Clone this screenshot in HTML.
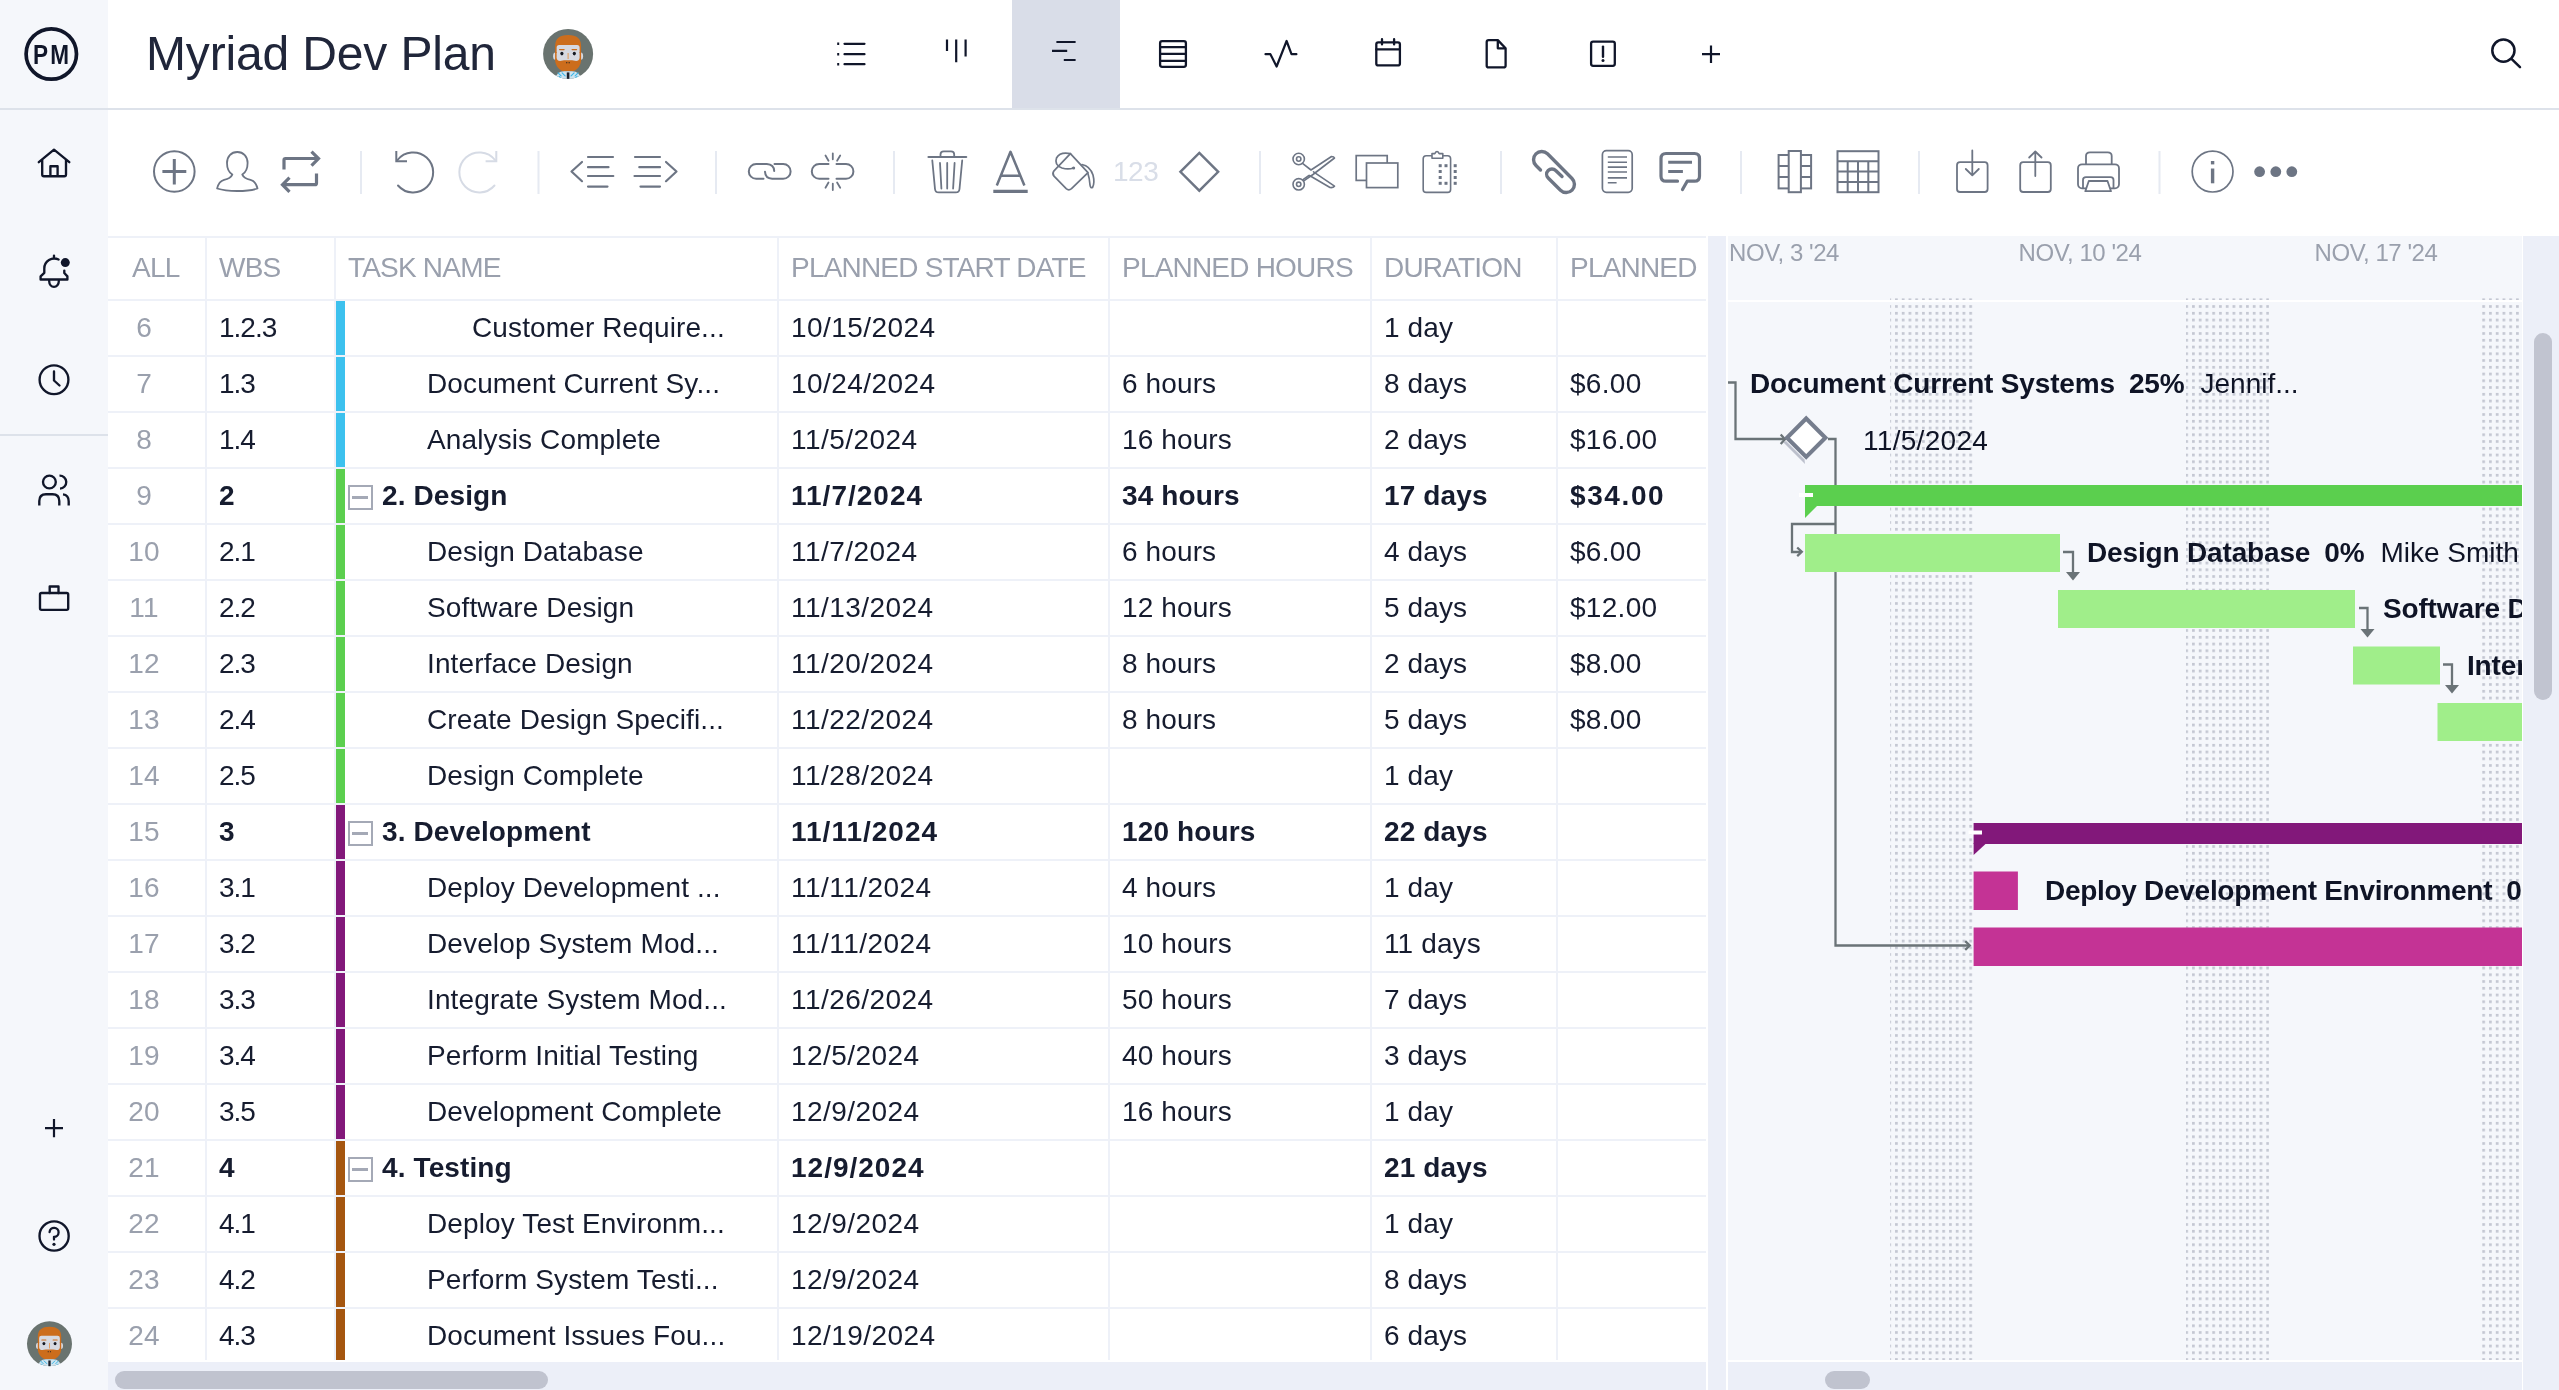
<!DOCTYPE html><html><head><meta charset="utf-8"><title>Myriad Dev Plan</title><style>html,body{margin:0;padding:0;background:#fff;}
body{width:2559px;height:1390px;overflow:hidden;font-family:"Liberation Sans",sans-serif;color:#0f1426;}
#app{will-change:transform;position:relative;width:2559px;height:1390px;overflow:hidden;background:#fff;}
.sidebar{position:absolute;left:0;top:0;width:108px;height:1390px;background:#f5f7fb;}
.tabact{position:absolute;left:1012px;top:0;width:108px;height:108px;background:#d9dde8;}
.hline{position:absolute;left:0;top:108px;width:2559px;height:2px;background:#dde2ea;}
.sline{position:absolute;left:0;top:434px;width:108px;height:2px;background:#dde2ea;}
.title{position:absolute;left:146px;top:24px;font-size:48px;line-height:60px;color:#20263a;letter-spacing:-0.15px;white-space:nowrap;}
.pm{position:absolute;left:21px;top:40px;width:60px;text-align:center;font-weight:bold;font-size:27.5px;line-height:30px;color:#10162a;transform:scaleX(0.82);transform-origin:50% 50%;letter-spacing:2.5px;text-indent:2.5px;}
.t123{position:absolute;left:1113px;top:156px;font-size:28px;line-height:32px;color:#d9dee8;letter-spacing:-0.5px;}
.tbl{position:absolute;left:0;top:0;width:1706px;height:1360px;overflow:hidden;}
.topline{position:absolute;left:108px;top:236px;width:1598px;height:2px;background:#eef1f8;}
.th{position:absolute;top:250.5px;font-size:28px;line-height:34px;color:#9aa0ad;letter-spacing:-0.8px;white-space:nowrap;}
.hl{position:absolute;left:108px;width:1598px;height:2px;background:#eef1f8;}
.vl{position:absolute;top:238px;width:2px;height:1124px;background:#eef1f8;}
.r{position:absolute;left:0;width:1706px;height:54px;font-size:28px;line-height:54px;white-space:nowrap;letter-spacing:0.12px;color:#161c2f;}
.r.b{font-weight:bold;}
.r .cb{position:absolute;left:336px;top:0;width:9px;height:54px;}
.r .n{position:absolute;left:108px;width:72px;text-align:center;color:#9aa0ad;font-weight:normal;}
.r .c{position:absolute;top:0;}
.r .cw{letter-spacing:-1px;}
.r .cd{letter-spacing:0.45px;}
.r.b .cd{letter-spacing:1px;}
.r .cc{letter-spacing:0.3px;}
.r.b .cc{letter-spacing:1.6px;}
.r .tg{position:absolute;left:347.5px;top:15.5px;width:25px;height:25px;border:2px solid #a4a9b6;box-sizing:border-box;}
.r .tg:after{content:"";position:absolute;left:2.5px;top:9px;width:16px;height:3px;background:#a4a9b6;}
.divider{position:absolute;left:1708px;top:236px;width:18px;height:1154px;background:#eceff8;}
.gantt{position:absolute;left:1728px;top:236px;width:794px;height:1126px;background:#f5f7fb;overflow:hidden;}
.gantt svg{position:absolute;left:0;top:0;}
.gh{position:absolute;top:0px;width:296px;text-align:center;font-size:24px;line-height:34px;color:#9aa0ad;white-space:nowrap;letter-spacing:-0.45px;}
.gl{position:absolute;height:40px;margin-top:-19px;line-height:40px;font-size:28px;white-space:nowrap;}
.gl .gb{font-weight:bold;letter-spacing:-0.16px;}
.gl .gx{letter-spacing:-0.29px;}
.gl .gd{letter-spacing:0.3px;}
.gl .gp{margin-left:14px;}
.gl .gr{margin-left:16px;}
.gl .gr:first-child{margin-left:0;}
.vsb{position:absolute;left:2523px;top:236px;width:36px;height:1154px;background:#eceff8;}
.vth{position:absolute;left:11px;top:97px;width:18px;height:367px;border-radius:9px;background:#c1c4d0;}
.hsb1{position:absolute;left:108px;top:1362px;width:1598px;height:28px;background:#eceff8;}
.hth1{position:absolute;left:7px;top:9px;width:433px;height:18px;border-radius:9px;background:#c0c3cf;}
.hsb2{position:absolute;left:1728px;top:1362px;width:794px;height:28px;background:#eceff8;}
.hth2{position:absolute;left:97px;top:9px;width:45px;height:18px;border-radius:9px;background:#c0c3cf;}
svg.ic{position:absolute;left:0;top:0;width:2559px;height:240px;}
svg.sb{position:absolute;left:0;top:0;width:108px;height:1390px;}
</style></head><body>
<div id="app">
<div class="sidebar"></div>
<div class="tabact"></div>
<div class="hline"></div><div class="sline"></div>
<div class="title">Myriad Dev Plan</div>
<div class="pm">PM</div>
<div class="t123">123</div>
<div class="tbl">
<div class="topline"></div>
<div class="th" style="left:132px">ALL</div>
<div class="th" style="left:219px">WBS</div>
<div class="th" style="left:348px">TASK NAME</div>
<div class="th" style="left:791px">PLANNED START DATE</div>
<div class="th" style="left:1122px">PLANNED HOURS</div>
<div class="th" style="left:1384px">DURATION</div>
<div class="th" style="left:1570px">PLANNED</div>
<div class="hl" style="top:299px"></div>
<div class="hl" style="top:355px"></div>
<div class="hl" style="top:411px"></div>
<div class="hl" style="top:467px"></div>
<div class="hl" style="top:523px"></div>
<div class="hl" style="top:579px"></div>
<div class="hl" style="top:635px"></div>
<div class="hl" style="top:691px"></div>
<div class="hl" style="top:747px"></div>
<div class="hl" style="top:803px"></div>
<div class="hl" style="top:859px"></div>
<div class="hl" style="top:915px"></div>
<div class="hl" style="top:971px"></div>
<div class="hl" style="top:1027px"></div>
<div class="hl" style="top:1083px"></div>
<div class="hl" style="top:1139px"></div>
<div class="hl" style="top:1195px"></div>
<div class="hl" style="top:1251px"></div>
<div class="hl" style="top:1307px"></div>
<div class="hl" style="top:1363px"></div>
<div class="vl" style="left:205px"></div>
<div class="vl" style="left:334px"></div>
<div class="vl" style="left:777px"></div>
<div class="vl" style="left:1108px"></div>
<div class="vl" style="left:1370px"></div>
<div class="vl" style="left:1556px"></div>
<div class="r" style="top:301px">
<span class="cb" style="background:#3cc1ee"></span>
<span class="n">6</span><span class="c cw" style="left:219px">1.2.3</span>
<span class="c" style="left:472px">Customer Require...</span>
<span class="c cd" style="left:791px">10/15/2024</span>
<span class="c" style="left:1384px">1 day</span>
</div>
<div class="r" style="top:357px">
<span class="cb" style="background:#3cc1ee"></span>
<span class="n">7</span><span class="c cw" style="left:219px">1.3</span>
<span class="c" style="left:427px">Document Current Sy...</span>
<span class="c cd" style="left:791px">10/24/2024</span>
<span class="c" style="left:1122px">6 hours</span>
<span class="c" style="left:1384px">8 days</span>
<span class="c cc" style="left:1570px">$6.00</span>
</div>
<div class="r" style="top:413px">
<span class="cb" style="background:#3cc1ee"></span>
<span class="n">8</span><span class="c cw" style="left:219px">1.4</span>
<span class="c" style="left:427px">Analysis Complete</span>
<span class="c cd" style="left:791px">11/5/2024</span>
<span class="c" style="left:1122px">16 hours</span>
<span class="c" style="left:1384px">2 days</span>
<span class="c cc" style="left:1570px">$16.00</span>
</div>
<div class="r b" style="top:469px">
<span class="cb" style="background:#5bcf4e"></span>
<span class="n">9</span><span class="c cw" style="left:219px">2</span>
<span class="tg"></span>
<span class="c" style="left:382px">2. Design</span>
<span class="c cd" style="left:791px">11/7/2024</span>
<span class="c" style="left:1122px">34 hours</span>
<span class="c" style="left:1384px">17 days</span>
<span class="c cc" style="left:1570px">$34.00</span>
</div>
<div class="r" style="top:525px">
<span class="cb" style="background:#5bcf4e"></span>
<span class="n">10</span><span class="c cw" style="left:219px">2.1</span>
<span class="c" style="left:427px">Design Database</span>
<span class="c cd" style="left:791px">11/7/2024</span>
<span class="c" style="left:1122px">6 hours</span>
<span class="c" style="left:1384px">4 days</span>
<span class="c cc" style="left:1570px">$6.00</span>
</div>
<div class="r" style="top:581px">
<span class="cb" style="background:#5bcf4e"></span>
<span class="n">11</span><span class="c cw" style="left:219px">2.2</span>
<span class="c" style="left:427px">Software Design</span>
<span class="c cd" style="left:791px">11/13/2024</span>
<span class="c" style="left:1122px">12 hours</span>
<span class="c" style="left:1384px">5 days</span>
<span class="c cc" style="left:1570px">$12.00</span>
</div>
<div class="r" style="top:637px">
<span class="cb" style="background:#5bcf4e"></span>
<span class="n">12</span><span class="c cw" style="left:219px">2.3</span>
<span class="c" style="left:427px">Interface Design</span>
<span class="c cd" style="left:791px">11/20/2024</span>
<span class="c" style="left:1122px">8 hours</span>
<span class="c" style="left:1384px">2 days</span>
<span class="c cc" style="left:1570px">$8.00</span>
</div>
<div class="r" style="top:693px">
<span class="cb" style="background:#5bcf4e"></span>
<span class="n">13</span><span class="c cw" style="left:219px">2.4</span>
<span class="c" style="left:427px">Create Design Specifi...</span>
<span class="c cd" style="left:791px">11/22/2024</span>
<span class="c" style="left:1122px">8 hours</span>
<span class="c" style="left:1384px">5 days</span>
<span class="c cc" style="left:1570px">$8.00</span>
</div>
<div class="r" style="top:749px">
<span class="cb" style="background:#5bcf4e"></span>
<span class="n">14</span><span class="c cw" style="left:219px">2.5</span>
<span class="c" style="left:427px">Design Complete</span>
<span class="c cd" style="left:791px">11/28/2024</span>
<span class="c" style="left:1384px">1 day</span>
</div>
<div class="r b" style="top:805px">
<span class="cb" style="background:#82187a"></span>
<span class="n">15</span><span class="c cw" style="left:219px">3</span>
<span class="tg"></span>
<span class="c" style="left:382px">3. Development</span>
<span class="c cd" style="left:791px">11/11/2024</span>
<span class="c" style="left:1122px">120 hours</span>
<span class="c" style="left:1384px">22 days</span>
</div>
<div class="r" style="top:861px">
<span class="cb" style="background:#82187a"></span>
<span class="n">16</span><span class="c cw" style="left:219px">3.1</span>
<span class="c" style="left:427px">Deploy Development ...</span>
<span class="c cd" style="left:791px">11/11/2024</span>
<span class="c" style="left:1122px">4 hours</span>
<span class="c" style="left:1384px">1 day</span>
</div>
<div class="r" style="top:917px">
<span class="cb" style="background:#82187a"></span>
<span class="n">17</span><span class="c cw" style="left:219px">3.2</span>
<span class="c" style="left:427px">Develop System Mod...</span>
<span class="c cd" style="left:791px">11/11/2024</span>
<span class="c" style="left:1122px">10 hours</span>
<span class="c" style="left:1384px">11 days</span>
</div>
<div class="r" style="top:973px">
<span class="cb" style="background:#82187a"></span>
<span class="n">18</span><span class="c cw" style="left:219px">3.3</span>
<span class="c" style="left:427px">Integrate System Mod...</span>
<span class="c cd" style="left:791px">11/26/2024</span>
<span class="c" style="left:1122px">50 hours</span>
<span class="c" style="left:1384px">7 days</span>
</div>
<div class="r" style="top:1029px">
<span class="cb" style="background:#82187a"></span>
<span class="n">19</span><span class="c cw" style="left:219px">3.4</span>
<span class="c" style="left:427px">Perform Initial Testing</span>
<span class="c cd" style="left:791px">12/5/2024</span>
<span class="c" style="left:1122px">40 hours</span>
<span class="c" style="left:1384px">3 days</span>
</div>
<div class="r" style="top:1085px">
<span class="cb" style="background:#82187a"></span>
<span class="n">20</span><span class="c cw" style="left:219px">3.5</span>
<span class="c" style="left:427px">Development Complete</span>
<span class="c cd" style="left:791px">12/9/2024</span>
<span class="c" style="left:1122px">16 hours</span>
<span class="c" style="left:1384px">1 day</span>
</div>
<div class="r b" style="top:1141px">
<span class="cb" style="background:#a5560f"></span>
<span class="n">21</span><span class="c cw" style="left:219px">4</span>
<span class="tg"></span>
<span class="c" style="left:382px">4. Testing</span>
<span class="c cd" style="left:791px">12/9/2024</span>
<span class="c" style="left:1384px">21 days</span>
</div>
<div class="r" style="top:1197px">
<span class="cb" style="background:#a5560f"></span>
<span class="n">22</span><span class="c cw" style="left:219px">4.1</span>
<span class="c" style="left:427px">Deploy Test Environm...</span>
<span class="c cd" style="left:791px">12/9/2024</span>
<span class="c" style="left:1384px">1 day</span>
</div>
<div class="r" style="top:1253px">
<span class="cb" style="background:#a5560f"></span>
<span class="n">23</span><span class="c cw" style="left:219px">4.2</span>
<span class="c" style="left:427px">Perform System Testi...</span>
<span class="c cd" style="left:791px">12/9/2024</span>
<span class="c" style="left:1384px">8 days</span>
</div>
<div class="r" style="top:1309px">
<span class="cb" style="background:#a5560f"></span>
<span class="n">24</span><span class="c cw" style="left:219px">4.3</span>
<span class="c" style="left:427px">Document Issues Fou...</span>
<span class="c cd" style="left:791px">12/19/2024</span>
<span class="c" style="left:1384px">6 days</span>
</div>
</div>
<div class="divider"></div>
<div class="gantt">
<svg width="794" height="1126" viewBox="1728 236 794 1126">
<defs><pattern id="dots" x="1888.300" y="298.400" width="6.750" height="6.750" patternUnits="userSpaceOnUse"><rect x="0" y="0" width="2.700" height="2.700" fill="#c4c7d2"/></pattern></defs>

<rect x="1728" y="1360" width="794" height="2" fill="#fff"/>
<rect x="1890" y="297" width="83" height="1063" fill="url(#dots)"/>
<rect x="2186" y="297" width="83" height="1063" fill="url(#dots)"/>
<rect x="2482" y="297" width="40" height="1063" fill="url(#dots)"/>
<rect x="1728" y="300" width="794" height="2" fill="#fff"/>
<g fill="none" stroke="#6a7377" stroke-width="2.300">
<path d="M1728,382.500H1735.500V439H1784"/><path d="M1780.700,434.400L1785,439.200L1780.700,444"/>
<path d="M1828,439H1835.500V945.500H1969"/><path d="M1965.200,941.200L1969.800,945.500L1965.200,949.800"/>
<path d="M1835.500,524H1792V552H1801"/><path d="M1797.200,547.500L1801.800,551.800L1797.200,556.100"/>
<path d="M2063,552H2073V574"/><path d="M2359,608H2367.500V630"/><path d="M2443,664.500H2452V686"/>
</g>
<g fill="#6a7377"><path d="M2066,572H2080L2073,580.500Z"/><path d="M2360.500,629H2374.500L2367.500,637.500Z"/><path d="M2445,685H2459L2452,693.500Z"/></g>
<path d="M1786,441L1804.500,459.500L1805,464L1783.500,442.500Z" fill="#bcc0cc"/>
<path d="M1806.200,418.500L1825.400,437.700L1806.200,456.900L1787,437.700Z" fill="#fff" stroke="#757d8d" stroke-width="4.100"/>
<rect x="1805" y="485" width="717" height="21" fill="#5bcf4e"/><path d="M1805,505H1818L1805,518Z" fill="#5bcf4e"/><rect x="1799" y="493" width="14" height="4" fill="#fff"/>
<rect x="1805" y="534" width="255" height="38" fill="#a0ee8a"/>
<rect x="2058" y="590" width="297" height="38" fill="#a0ee8a"/>
<rect x="2353" y="646.500" width="87" height="38" fill="#a0ee8a"/>
<rect x="2437.500" y="703" width="85" height="38" fill="#a0ee8a"/>
<rect x="1973.600" y="823" width="549" height="21" fill="#82187a"/><path d="M1973.600,843H1986.600L1973.600,855Z" fill="#82187a"/><rect x="1968.500" y="830.500" width="13.500" height="4" fill="#fff"/>
<rect x="1973.600" y="871.500" width="44.300" height="38.500" fill="#c43395"/>
<rect x="1973.600" y="927.500" width="549" height="38.500" fill="#c43395"/>
</svg>

<div class="gh" style="left:-92px">NOV, 3 '24</div><div class="gh" style="left:204px">NOV, 10 '24</div><div class="gh" style="left:500px">NOV, 17 '24</div>
<div class="gl" style="left:22px;top:147px"><span class="gb">Document Current Systems</span><span class="gb gp">25%</span><span class="gr">Jennif...</span></div>
<div class="gl" style="left:135px;top:204px"><span class="gr gd">11/5/2024</span></div>
<div class="gl" style="left:359px;top:316px"><span class="gb">Design Database</span><span class="gb gp">0%</span><span class="gr">Mike Smith</span></div>
<div class="gl" style="left:655px;top:372px"><span class="gb">Software Design</span><span class="gb gp">0%</span><span class="gr">Mike Smith</span></div>
<div class="gl" style="left:739px;top:429px"><span class="gb">Interface Design</span><span class="gb gp">0%</span><span class="gr">Mike Smith</span></div>
<div class="gl" style="left:317px;top:654px"><span class="gb gx">Deploy Development Environment</span><span class="gb gp">0%</span><span class="gr">Mike Smith</span></div>
</div>
<div class="vsb"><div class="vth"></div></div>
<div class="hsb1"><div class="hth1"></div></div>
<div class="hsb2"><div class="hth2"></div></div>
<svg class="ic" viewBox="0 0 2559 240" fill="none" stroke-linecap="round" stroke-linejoin="round">
<!-- header avatar -->
<g transform="translate(568.1,53.9) scale(1)">
<circle r="25" fill="#69736f" stroke="none"/>
<clipPath id="avc"><circle r="25"/></clipPath>
<g clip-path="url(#avc)" stroke="none">
<path d="M-13,26 Q-12,17.300 -4,17.300 H4 Q12,17.300 13,26 Z" fill="#cfe3ee"/>
<path d="M-10,19 l3,3 M-6,19 l3,3 M6,19 l-3,3 M10,19 l-3,3 M-9,22.500 l2,2 M9,22.500 l-2,2" stroke="#38b6e8" stroke-width="1.100" fill="none"/>
<rect x="-1.300" y="18.500" width="2.600" height="6.500" fill="#1d212b"/>
<ellipse cx="-12.800" cy="2.300" rx="2.200" ry="3.600" fill="#d6d9e1"/><ellipse cx="12.800" cy="2.300" rx="2.200" ry="3.600" fill="#d6d9e1"/>
<rect x="-12" y="-10" width="24" height="19" rx="3" fill="#d6d9e1"/>
<path d="M-13,-1 V-8 Q-13,-19 0,-19 Q13,-19 13,-8 V-1 L11.500,-1 V-6.500 Q11.500,-9 9,-9 H-9 Q-11.500,-9 -11.500,-6.500 V-1 Z" fill="#cc6d1c"/>
<path d="M-13,-2 H-11.500 V4 Q-11,7 -8,7 L-4,6.300 H4 L8,7 Q11,7 11.500,4 V-2 H13 V7 Q12,14 6,17 H-6 Q-12,14 -13,7 Z" fill="#cc6d1c"/>
<path d="M-8.500,-4.300 H-4 M4,-4.300 H8.500" stroke="#cc6d1c" stroke-width="1.200" fill="none"/>
<path d="M0,-0.500 V4.800" stroke="#e59a55" stroke-width="1" fill="none"/>
<ellipse cx="-6.200" cy="-0.300" rx="1.600" ry="1.800" fill="#151922"/><ellipse cx="6.200" cy="-0.300" rx="1.600" ry="1.800" fill="#151922"/>
<rect x="-2" y="8.200" width="1.200" height="1.200" fill="#3a2a20"/><rect x="0.500" y="8.200" width="1.200" height="1.200" fill="#3a2a20"/>
</g></g>
<!-- tabs -->
<g stroke="#10162a" stroke-width="2.2">
<path d="M844.500,43.800H864.500M844.500,54.200H864.500M844.500,64.200H864.500"/>
<path d="M837.200,43.800H839.200M837.200,54.200H839.200M837.200,64.200H839.200" stroke-width="2.400" stroke-linecap="butt"/>
<path d="M947,39.500V50.900M956.200,39.500V62.200M965.600,39.500V56.500" stroke-linecap="butt"/>
<path d="M1056.400,42H1075.600M1052,50.900H1067.200M1063.800,60H1075.600" stroke-linecap="butt"/>
<rect x="1160.100" y="41.200" width="25.800" height="25.600" rx="2" stroke-width="2.300"/>
<path d="M1160.100,47.200H1185.900M1160.100,53.900H1185.900M1160.100,60.900H1185.900" stroke-width="2.200" stroke-linecap="butt"/>
<path d="M1265.500,54.200H1270.400L1276.600,66.500L1286.600,41L1291.500,54.200H1296.400" stroke-width="2.200"/>
<rect x="1376.300" y="42.300" width="23.600" height="23.100" rx="2" stroke-width="2.300"/>
<path d="M1376.300,49.300H1399.900M1382,39.200V44.400M1394.100,39.200V44.400" stroke-width="2.300"/>
<path d="M1497.800,40.100H1488.700Q1486.700,40.100 1486.700,42.100V65.400Q1486.700,67.400 1488.700,67.400H1503.600Q1505.600,67.400 1505.600,65.400V48.300L1497.800,40.100V48.300H1505.600" stroke-width="2.300"/>
<rect x="1591.100" y="41.600" width="23.700" height="24.200" rx="2" stroke-width="2.300"/>
<path d="M1603,46.600V56.800" stroke-width="2.400"/><circle cx="1603" cy="60.500" r="1.500" fill="#10162a" stroke="none"/>
<path d="M1702,54.200H1720M1711,45.400V63" stroke-linecap="butt"/>
<circle cx="2503.400" cy="50.600" r="11.100" stroke-width="2.500"/><path d="M2511.500,58.800L2520,67.200" stroke-width="2.500"/>
</g>
<!-- toolbar separators -->
<g stroke="#e6eaf2" stroke-width="2" stroke-linecap="butt">
<path d="M361,151V194M538.500,151V194M716,151V194M894,151V194M1260,151V194M1501,151V194M1741,151V194M1919,151V194M2159.500,151V194"/>
</g>
<!-- toolbar icons -->
<g stroke="#6d7584" stroke-width="2">
<circle cx="174.300" cy="171.500" r="20.300"/>
<path d="M162.400,171.500H186.300M174.300,159V184.400" stroke-width="3" stroke-linecap="butt"/>
<!-- user -->
<path d="M237.300,152C243.500,152 247.600,156.500 247.600,163C247.600,168.500 245.500,172.500 242.300,174.600C243.500,177.500 246.500,179 250.500,179.800C254.500,180.800 256.800,185.500 257.500,188.500C252,190.300 245,191 237.300,191C229.600,191 222.600,190.300 217.100,188.500C217.800,185.500 220.100,180.800 224.100,179.800C228.100,179 231.100,177.500 232.300,174.600C229.100,172.500 227,168.500 227,163C227,156.500 231.100,152 237.300,152Z" stroke-width="1.800"/>
<!-- repeat -->
<g stroke-width="3.200" stroke-linecap="butt" stroke-linejoin="miter">
<path d="M284,169.500V160Q284,158.500 285.500,158.500H317.500"/><path d="M311.500,151.600L318.500,158.500L311.500,165.600"/>
<path d="M316.500,173.500V183.200Q316.500,184.700 315,184.700H283"/><path d="M289.500,177.600L282.500,184.700L289.500,191.800"/>
</g>
<!-- undo -->
<path d="M397.500,160A20,20 0 1 1 398,185.500"/><path d="M396.300,151V161.300H407" stroke-linecap="butt" stroke-linejoin="miter"/>
<!-- redo (disabled) -->
<g stroke="#d6dbe5"><path d="M495,160A20,20 0 1 0 494.500,185.500"/><path d="M496.300,151V161.300H485.600" stroke-linecap="butt" stroke-linejoin="miter"/></g>
<!-- outdent -->
<g stroke-width="2.200"><path d="M582,162L571.500,171.500L582,181.200M588,157H613M588,167.200H608.500M588,176H613.300M588,186.600H607.500"/>
<!-- indent -->
<path d="M666,162L676.500,171.500L666,181.200M635,157H660M639.300,167.200H660M634.500,176H660M640.500,186.600H660"/></g>
<!-- link -->
<path d="M763,164H756.200A7.400,7.400 0 0 0 756.200,178.800H763.500"/><path d="M763.500,164H766.800Q774,164.500 774.200,171"/>
<path d="M774.500,164H783.200A7.400,7.400 0 0 1 783.200,178.800H772.200Q765.300,178.300 765,171.700"/>
<!-- unlink -->
<path d="M828.500,164H819.200A7.400,7.400 0 0 0 819.200,178.800H828.500M836.500,164H846A7.400,7.400 0 0 1 846,178.800H836.500"/>
<path d="M832.800,153.300V159.300M825.500,155.500L828.500,160.700M840.200,155.500L837.100,160.700M832.800,183.600V190M828.500,182.500L825.500,187.700M837.100,182.500L840.200,187.700" stroke-width="1.800"/>
<!-- trash -->
<path d="M928.500,157H966.200" stroke-width="2.200"/><path d="M940.500,156.500V154.500Q940.500,151.300 943.700,151.300H951Q954.200,151.300 954.200,154.500V156.500" stroke-width="1.800"/>
<path d="M932.300,160.500L935,189Q935.300,192.400 938.700,192.400H955.800Q959.200,192.400 959.500,189L962.200,160.500" stroke-width="1.800"/>
<path d="M940,163L941.400,188.500M947.200,163V188.500M954.600,163L953.100,188.500" stroke-width="1.800"/>
<!-- A -->
<path d="M996.800,185.500L1010.500,151.800L1024.400,185.500M1001,175.800H1020" stroke-width="2.500" stroke-linecap="butt" stroke-linejoin="round"/>
<path d="M993.300,191.400H1027.700" stroke-width="3.400" stroke-linecap="butt"/>
<!-- bucket -->
<g stroke-width="1.700"><path d="M1070.400,153.600L1088,172.600L1071.500,188.600Q1068.800,191 1066.200,188.600L1054,176.200Q1051.800,173.600 1054,170.800Z"/>
<path d="M1070.400,153.600Q1060,151.500 1056.500,158Q1054,165 1062,168Q1068,169.800 1073.500,168"/><circle cx="1073.600" cy="168" r="1.600" fill="#6d7584" stroke="none"/>
<path d="M1082,164.500Q1090,166 1093,175Q1095,183 1092.500,187.500Q1090.500,188.500 1090,185Q1089.500,178 1087.800,173"/></g>
<!-- diamond -->
<path d="M1199.300,152.900L1218.200,171.800L1199.300,190.700L1180.400,171.800Z" stroke-width="2.400" stroke-linejoin="miter"/>
<!-- scissors -->
<g stroke-width="1.600"><circle cx="1298.700" cy="159" r="5.700"/><circle cx="1298.700" cy="159" r="2.200"/><circle cx="1298.700" cy="184.300" r="5.700"/><circle cx="1298.700" cy="184.300" r="2.200"/>
<path d="M1302.500,163.300L1311,170L1331.500,156.500Q1334,156.500 1334.500,158L1313,174.500L1303.800,180.800"/><path d="M1303,179.700L1309,175.500"/>
<path d="M1313.500,171.800L1334.500,186.200Q1333,188 1330,187.500L1309.500,175.500"/></g>
<!-- copy -->
<g stroke-width="1.700" stroke-linejoin="miter"><rect x="1356.200" y="155.600" width="31" height="24.800"/><rect x="1366.500" y="163" width="31.300" height="24.600" fill="#fff"/></g>
<!-- paste -->
<g stroke-width="1.600"><rect x="1423.200" y="155.700" width="27.400" height="36.700" rx="3"/><path d="M1432,153.600H1434.800Q1437,149.500 1439.200,153.600H1442.800V158.200H1432Z" fill="#fff"/>
</g>
<g fill="#6d7584" stroke="none"><rect x="1438.700" y="164.200" width="3" height="3"/><rect x="1444.500" y="164.200" width="3" height="3"/><rect x="1438.700" y="170" width="3" height="3"/><rect x="1438.700" y="176" width="3" height="3"/><rect x="1438.700" y="181.800" width="3" height="3"/><rect x="1444.500" y="181.800" width="3" height="3"/><rect x="1453.700" y="164.200" width="3" height="3"/><rect x="1453.700" y="170" width="3" height="3"/><rect x="1453.700" y="176" width="3" height="3"/><rect x="1453.700" y="181.800" width="3" height="3"/></g>
<!-- paperclip -->
<path d="M1540.500,170L1536,165.500A8.200,8.200 0 0 1 1547.500,153.800L1572,178.500A8.200,8.200 0 0 1 1560.500,190.200L1548.200,178A5.300,5.300 0 0 1 1555.700,170.500L1562,176.500" stroke-width="3.400"/>
<!-- doc -->
<rect x="1602.400" y="150.700" width="29.800" height="41.600" rx="4" stroke-width="1.700"/>
<path d="M1607.800,157H1627M1607.800,162.200H1627M1607.800,167.100H1627M1607.800,172H1627M1607.800,177.900H1627M1607.800,182.800H1616.600" stroke-width="1.600" stroke-linecap="butt"/>
<!-- comment -->
<path d="M1677.500,181.200H1666Q1661,181.200 1661,176.200V158.500Q1661,153.500 1666,153.500H1694.500Q1699.500,153.500 1699.500,158.500V176.200Q1699.500,181.200 1694.500,181.200H1687.200L1682.500,189.500" stroke-width="3.200"/>
<path d="M1668.200,162.200H1692M1668.200,171.400H1682.900" stroke-width="3" stroke-linecap="butt"/>
<!-- columns -->
<g stroke-width="2" stroke-linejoin="miter" stroke-linecap="butt"><rect x="1778.600" y="155" width="32.500" height="33.400"/><path d="M1778.600,166.100H1811M1778.600,177H1811"/><rect x="1788.700" y="151" width="12.200" height="41.200" fill="#fff"/></g>
<!-- grid -->
<g stroke-width="2" stroke-linejoin="miter" stroke-linecap="butt"><rect x="1837.500" y="151.200" width="41" height="41"/><path d="M1837.500,161.300H1878.500M1837.500,171.600H1878.500M1837.500,181.900H1878.500M1847.700,161.300V192M1858,161.300V192M1868.300,161.300V192"/></g>
<!-- download -->
<g stroke-width="1.800"><rect x="1957" y="162.200" width="30.600" height="29.800" rx="3"/><path d="M1972.300,150.500V175M1965.800,169L1972.300,175.400L1978.800,169"/>
<rect x="2020.200" y="162.200" width="30.600" height="29.800" rx="3"/><path d="M2035.300,151.500V176M2029.200,157.500L2035.300,151.500L2041.500,157.500"/>
<!-- printer -->
<path d="M2086,164V156Q2086,152.300 2090,152.300H2107.700Q2111.700,152.300 2111.700,156V164"/>
<rect x="2078" y="164.300" width="41" height="24" rx="4"/>
<path d="M2083,188V180Q2083,177.200 2086,177.200H2110.500Q2113.500,177.200 2113.500,180V188" />
<path d="M2088.800,181H2107.500L2111,191.200H2085.300Z" fill="#fff"/></g>
<!-- info -->
<circle cx="2212.600" cy="171.600" r="20.400" stroke-width="1.700"/>
<path d="M2212.600,168.500V183.300" stroke-width="3.400" stroke-linecap="butt"/><rect x="2210.900" y="161" width="3.400" height="3.400" fill="#6d7584" stroke="none"/>
<g fill="#6d7584" stroke="none"><circle cx="2259.600" cy="171.700" r="5.400"/><circle cx="2275.800" cy="171.700" r="5.400"/><circle cx="2291.800" cy="171.700" r="5.400"/></g>
</g>
</svg>
<svg class="sb" viewBox="0 0 108 1390" fill="none" stroke="#10162a" stroke-width="2.350" stroke-linecap="round" stroke-linejoin="round">
<circle cx="51.300" cy="54" r="25.200" stroke-width="3.700"/>
<!-- home -->
<path d="M38.800,162.200L54,149.600L69.300,162.200M42.200,160V174.500Q42.200,176.200 43.900,176.200H64.300Q66,176.200 66,174.500V160M50.400,176V166.200H57.600V176"/>
<!-- bell -->
<path d="M54,255.600V258.400M58.600,259.500A10,10 0 0 0 44.300,268.500V272.800L40.600,276.400V279.500H67.400V276.400L64.300,273V270.600M49.200,281.200A4.800,5.600 0 0 0 58.800,281.200"/>
<circle cx="65.300" cy="262.600" r="4.500" fill="#10162a" stroke="none"/>
<!-- clock -->
<circle cx="54" cy="379.700" r="14.400"/><path d="M54,371.500V380.500L59.500,385.500"/>
<!-- users -->
<circle cx="49.400" cy="482" r="6.400"/><path d="M59.500,475.600A6.500,6.500 0 0 1 60,488.600M39.300,505.500V501Q39.300,494.200 46,494.200H52.500Q59.300,494.200 59.300,501V505.500M63,494.300Q68.700,494.800 68.700,501.500V505.500" stroke-linecap="butt"/>
<!-- briefcase -->
<rect x="40" y="593" width="28.200" height="16.800" rx="1.500"/><path d="M49.700,593V586.500H58.500V593"/>
<!-- plus -->
<path d="M45,1128.200H63M54,1119V1137.300" stroke-width="2.200" stroke-linecap="butt"/>
<!-- help -->
<circle cx="54.100" cy="1236" r="14.600"/>
<path d="M49.600,1232A4.500,4.500 0 1 1 54,1236.800V1239.600" stroke-width="2.300"/><circle cx="54" cy="1244.300" r="1.600" fill="#10162a" stroke="none"/>
<!-- avatar -->
<g transform="translate(49.5,1343.8) scale(0.9)">
<circle r="25" fill="#69736f" stroke="none"/>
<clipPath id="avc2"><circle r="25"/></clipPath>
<g clip-path="url(#avc2)" stroke="none">
<path d="M-13,26 Q-12,17.300 -4,17.300 H4 Q12,17.300 13,26 Z" fill="#cfe3ee"/>
<path d="M-10,19 l3,3 M-6,19 l3,3 M6,19 l-3,3 M10,19 l-3,3 M-9,22.500 l2,2 M9,22.500 l-2,2" stroke="#38b6e8" stroke-width="1.100" fill="none"/>
<rect x="-1.300" y="18.500" width="2.600" height="6.500" fill="#1d212b"/>
<ellipse cx="-12.800" cy="2.300" rx="2.200" ry="3.600" fill="#d6d9e1"/><ellipse cx="12.800" cy="2.300" rx="2.200" ry="3.600" fill="#d6d9e1"/>
<rect x="-12" y="-10" width="24" height="19" rx="3" fill="#d6d9e1"/>
<path d="M-13,-1 V-8 Q-13,-19 0,-19 Q13,-19 13,-8 V-1 L11.500,-1 V-6.500 Q11.500,-9 9,-9 H-9 Q-11.500,-9 -11.500,-6.500 V-1 Z" fill="#cc6d1c"/>
<path d="M-13,-2 H-11.500 V4 Q-11,7 -8,7 L-4,6.300 H4 L8,7 Q11,7 11.500,4 V-2 H13 V7 Q12,14 6,17 H-6 Q-12,14 -13,7 Z" fill="#cc6d1c"/>
<path d="M-8.500,-4.300 H-4 M4,-4.300 H8.500" stroke="#cc6d1c" stroke-width="1.200" fill="none"/>
<path d="M0,-0.500 V4.800" stroke="#e59a55" stroke-width="1" fill="none"/>
<ellipse cx="-6.200" cy="-0.300" rx="1.600" ry="1.800" fill="#151922"/><ellipse cx="6.200" cy="-0.300" rx="1.600" ry="1.800" fill="#151922"/>
<rect x="-2" y="8.200" width="1.200" height="1.200" fill="#3a2a20"/><rect x="0.500" y="8.200" width="1.200" height="1.200" fill="#3a2a20"/>
</g></g>
</svg>

</div></body></html>
